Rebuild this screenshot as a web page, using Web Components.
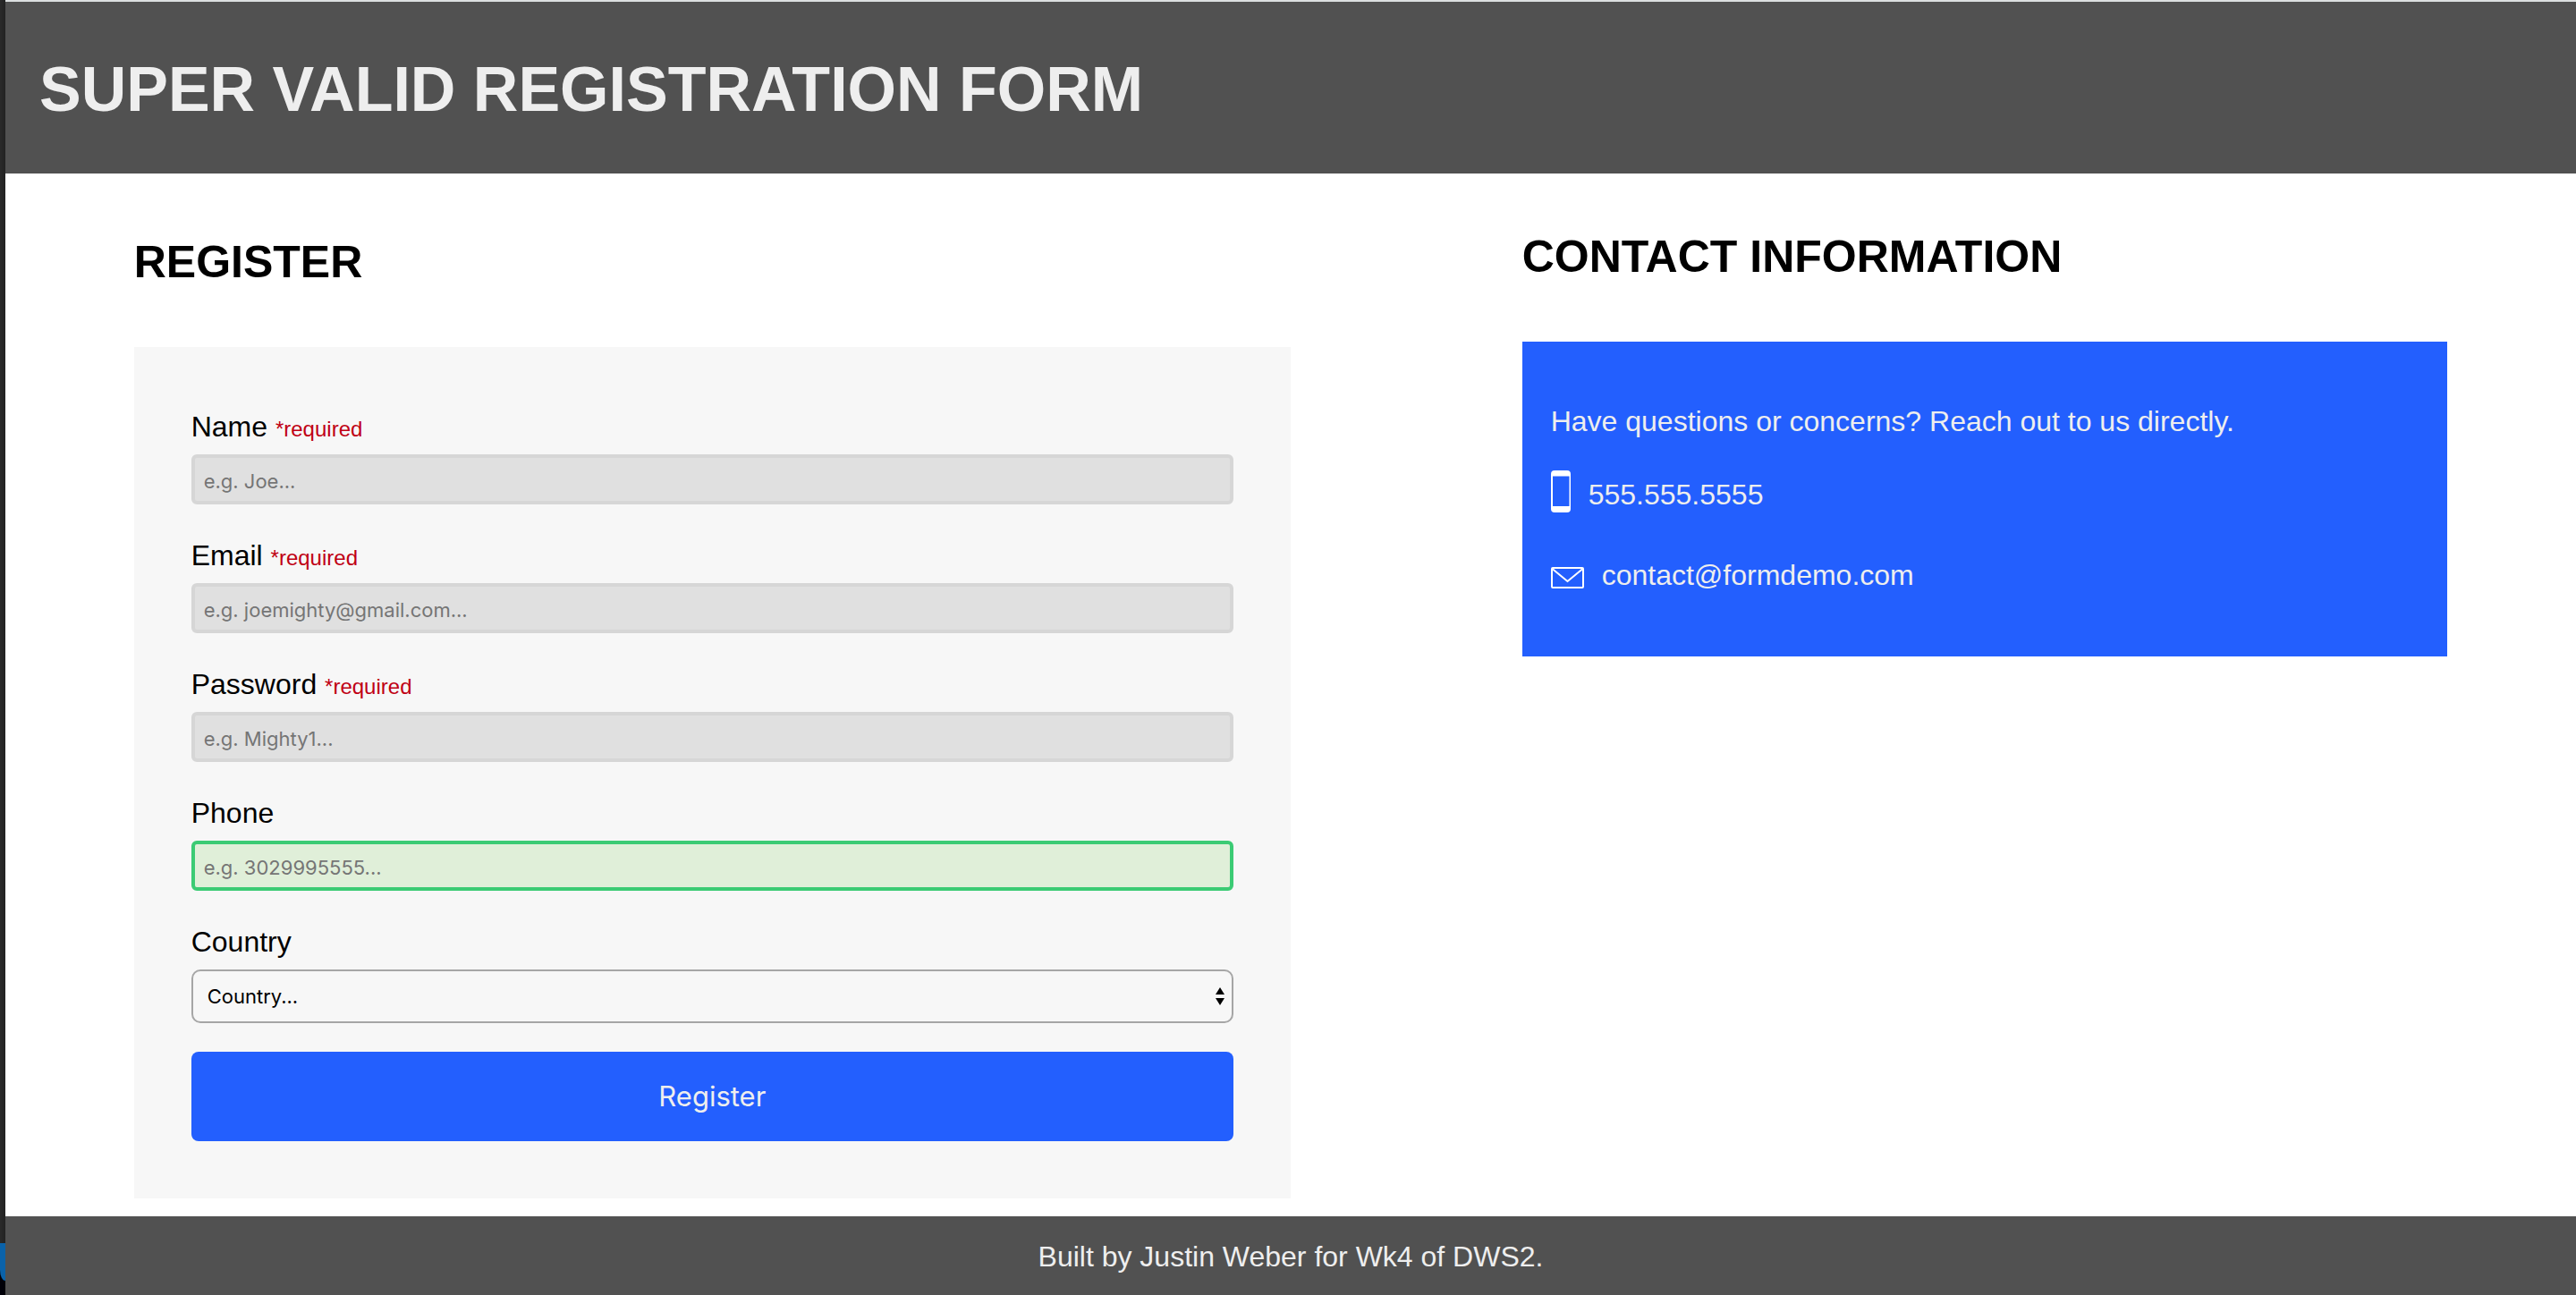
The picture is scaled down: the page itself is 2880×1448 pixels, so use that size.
<!DOCTYPE html>
<html lang="en">
<head>
<meta charset="utf-8">
<title>Super Valid Registration Form</title>
<style>
  body {
    margin: 0;
    min-height: 100vh;
    display: flex;
    background: #fff;
    color: #000;
    font: 32px/50px "Liberation Sans", Arial, sans-serif;
  }
  site-page { flex: 1; }
</style>
</head>
<body>
<desk-edge></desk-edge>
<site-page>
  <site-header slot="header">SUPER VALID REGISTRATION FORM</site-header>
  <register-form></register-form>
  <contact-info></contact-info>
  <site-footer slot="footer">Built by Justin Weber for Wk4 of DWS2.</site-footer>
</site-page>

<script>
  class Base extends HTMLElement {
    render(html) {
      this.attachShadow({ mode: 'open' }).innerHTML =
        '<style>*{box-sizing:border-box}</style>' + html;
    }
  }

  // Narrow strip of the desktop beside the page
  customElements.define('desk-edge', class extends Base {
    constructor() {
      super();
      this.render(`
        <style>
          :host { display: flex; flex-direction: column; width: 6px; background: #000008; }
          .dark { flex: 1; background: linear-gradient(90deg, #2a2a2a, #222); }
          .blue { height: 42px; margin-bottom: 16px; background: #0a62a9; border-bottom-left-radius: 6px 12px; }
        </style>
        <div class="dark"></div><div class="blue"></div>`);
    }
  });

  customElements.define('site-page', class extends Base {
    constructor() {
      super();
      this.render(`
        <style>
          :host { display: flex; flex-direction: column; border-top: 2px solid #dcdfe0; }
          main { flex: 1; display: flex; justify-content: space-between; align-items: flex-start; padding: 0 5% 20px; }
        </style>
        <slot name="header"></slot>
        <main><slot></slot></main>
        <slot name="footer"></slot>`);
    }
  });

  customElements.define('site-header', class extends Base {
    constructor() {
      super();
      this.render(`
        <style>
          :host { display: block; background: #515151; color: #eee; }
          h1 { margin: 0; padding: 58px 38px 54px; font-size: 70px; line-height: 80px; }
        </style>
        <header><h1><slot></slot></h1></header>`);
    }
  });

  customElements.define('site-footer', class extends Base {
    constructor() {
      super();
      this.render(`
        <style>
          :host { display: block; background: #515151; color: #eee; }
          footer { padding: 20px 0 18px; text-align: center; }
        </style>
        <footer><slot></slot></footer>`);
    }
  });

  customElements.define('form-field', class extends Base {
    constructor() {
      super();
      const a = n => this.getAttribute(n) || '';
      const required = this.hasAttribute('required');
      const control = a('type') === 'select'
        ? `<span class="pick">
             <select id="control"><option>${a('placeholder')}</option></select>
             <svg width="10" height="20" viewBox="0 0 10 20" aria-hidden="true"><path d="M5 0l5 8H0zM5 20l5-8H0z"/></svg>
           </span>`
        : `<input id="control" type="${a('type')}" placeholder="${a('placeholder')}" ${required ? 'required' : ''}>`;
      this.render(`
        <style>
          :host { display: flex; flex-direction: column; gap: 6px; }
          small { font-size: 24px; line-height: 24px; color: #c00014; }
          input, select {
            display: block; width: 100%; margin: 0; outline: 0;
            font: 22px/28px Inter, sans-serif; color: #000;
          }
          input {
            height: 56px; padding: 12px 10px 8px;
            border: 4px solid #d6d6d6; border-radius: 6px; background: #e0e0e0;
          }
          input::placeholder { color: #757575; opacity: 1; }
          input:not(:required):valid { border-color: #3bcb74; background: #e0efd9; }
          select {
            appearance: none; height: 60px; padding: 0 40px 0 16px;
            border: 2px solid #a6a6a6; border-radius: 10px; background: transparent;
          }
          .pick { display: grid; align-items: center; }
          .pick > * { grid-area: 1 / 1; }
          svg { justify-self: end; margin-right: 10px; pointer-events: none; }
        </style>
        <label for="control">${a('label')}${required ? ' <small>*required</small>' : ''}</label>
        ${control}`);
    }
  });

  customElements.define('register-form', class extends Base {
    constructor() {
      super();
      this.render(`
        <style>
          :host { display: block; width: 50%; }
          h2 { margin: 0; padding: 68px 0 64px; font-size: 50px; line-height: 62px; }
          form { display: flex; flex-direction: column; gap: 32px; padding: 64px; background: #f7f7f7; }
          button {
            height: 100px; border: 0; border-radius: 8px; background: #235ffe; color: #eee;
            font: 31px/40px Inter, sans-serif;
          }
        </style>
        <h2>REGISTER</h2>
        <form>
          <form-field label="Name" type="text" placeholder="e.g. Joe..." required></form-field>
          <form-field label="Email" type="email" placeholder="e.g. joemighty@gmail.com..." required></form-field>
          <form-field label="Password" type="password" placeholder="e.g. Mighty1..." required></form-field>
          <form-field label="Phone" type="tel" placeholder="e.g. 3029995555..."></form-field>
          <form-field label="Country" type="select" placeholder="Country..."></form-field>
          <button type="button">Register</button>
        </form>`);
    }
  });

  customElements.define('contact-info', class extends Base {
    constructor() {
      super();
      this.render(`
        <style>
          :host { display: block; width: 40%; }
          h2 { margin: 0; padding: 62px 0 64px; font-size: 50px; line-height: 62px; }
          address { padding: 64px 32px 66px; font-style: normal; background: #235ffe; color: #eee; }
          p { margin: 0 0 30px; }
          ul { margin: 0; padding: 0; list-style: none; display: flex; flex-direction: column; gap: 38px; }
          li { display: flex; align-items: center; gap: 20px; }
          a { color: inherit; text-decoration: none; }
          svg { display: block; }
        </style>
        <h2>CONTACT INFORMATION</h2>
        <address>
          <p>Have questions or concerns? Reach out to us directly.</p>
          <ul>
            <li>
              <svg width="22" height="54" viewBox="0 0 22 54" aria-hidden="true">
                <path fill="#fff" fill-rule="evenodd" d="M4 0h14q4 0 4 4v39q0 4-4 4H4q-4 0-4-4V4q0-4 4-4zM2 6.500v33.500h18.500V6.500z"/>
              </svg>
              <a href="tel:5555555555">555.555.5555</a>
            </li>
            <li>
              <svg width="37" height="30" viewBox="0 -6 37 30" aria-hidden="true">
                <g fill="none" stroke="#fff" stroke-width="2"><rect x="1" y="1" width="35" height="22" rx="1"/><path d="M1.500 2l17 14 17-14"/></g>
              </svg>
              <a href="mailto:contact@formdemo.com">contact@formdemo.com</a>
            </li>
          </ul>
        </address>`);
    }
  });
</script>
</body>
</html>
